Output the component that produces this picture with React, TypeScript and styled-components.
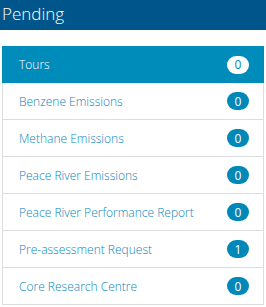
import React from "react";
import styled, { createGlobalStyle } from "styled-components";

const Global = createGlobalStyle`
  html, body { margin: 0; padding: 0; background: #fff; }
  body { font-family: "Open Sans", "Noto Sans", sans-serif; }
`;

const Page = styled.div`
  width: 266px;
  display: flex;
  flex-direction: column;
`;

const Header = styled.div`
  height: 30px;
  background: #00568a;
  color: #fff;
  font-size: 17px;
  font-weight: 300;
  line-height: 27px;
  padding-left: 2px;
  box-sizing: border-box;
`;

const List = styled.ul`
  list-style: none;
  margin: 16px 2px 0 2px;
  padding: 0;
  display: flex;
  flex-direction: column;
`;

const Item = styled.li<{ $active?: boolean }>`
  height: 37px;
  box-sizing: border-box;
  display: flex;
  align-items: center;
  justify-content: space-between;
  padding: 0 14px 0 16px;
  font-size: 12px;
  font-weight: 300;
  color: ${(p) => (p.$active ? "#fff" : "#0a86bb")};
  background: ${(p) => (p.$active ? "#008cba" : "#fff")};
  border: 1px solid ${(p) => (p.$active ? "#008cba" : "#dddddd")};
  border-top: ${(p) => (p.$active ? "1px solid #008cba" : "none")};
`;

const Badge = styled.span<{ $active?: boolean }>`
  min-width: 22px;
  height: 18px;
  box-sizing: border-box;
  border-radius: 9px;
  display: flex;
  align-items: center;
  justify-content: center;
  font-size: 12px;
  font-weight: 400;
  background: ${(p) => (p.$active ? "#fff" : "#0088b9")};
  color: ${(p) => (p.$active ? "#0088b9" : "#fff")};
`;

const items = [
  { label: "Tours", count: 0, active: true },
  { label: "Benzene Emissions", count: 0 },
  { label: "Methane Emissions", count: 0 },
  { label: "Peace River Emissions", count: 0 },
  { label: "Peace River Performance Report", count: 0 },
  { label: "Pre-assessment Request", count: 1 },
  { label: "Core Research Centre", count: 0 },
];

export default function App() {
  return (
    <Page>
      <Global />
      <Header>Pending</Header>
      <List>
        {items.map((it) => (
          <Item key={it.label} $active={it.active}>
            <span>{it.label}</span>
            <Badge $active={it.active}>{it.count}</Badge>
          </Item>
        ))}
      </List>
    </Page>
  );
}
